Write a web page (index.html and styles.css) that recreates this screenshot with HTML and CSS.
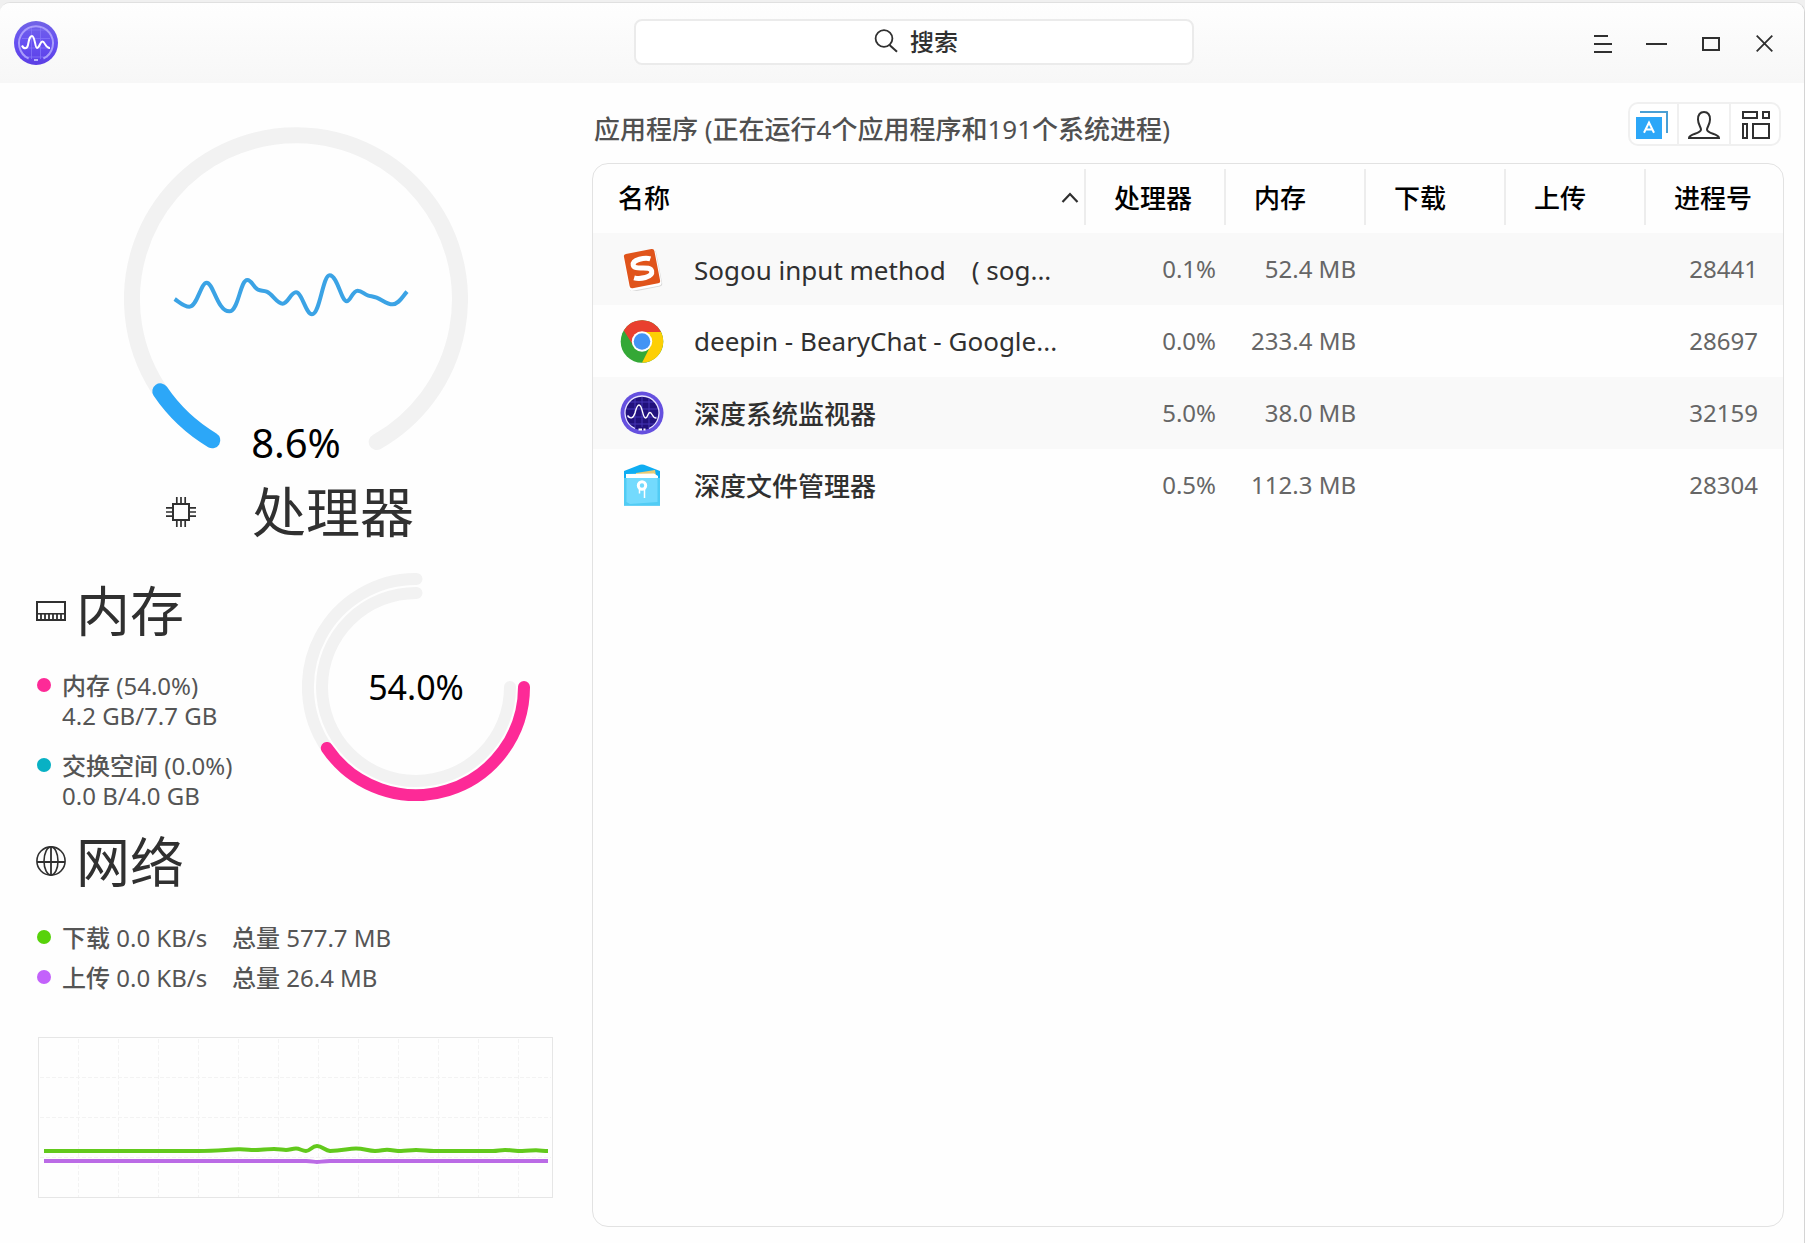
FILE: index.html
```html
<!DOCTYPE html>
<html lang="zh-CN">
<head>
<meta charset="utf-8">
<title>深度系统监视器</title>
<link rel="stylesheet" href="styles.css">
</head>
<body>
<div class="window">
  <header class="titlebar">
    <svg class="logo" width="44" height="44" viewBox="0 0 44 44">
      <defs>
        <linearGradient id="logo-bg" x1="0" y1="0" x2="0" y2="1"><stop offset="0" stop-color="#7163e6"/><stop offset="0.5" stop-color="#6650f2"/><stop offset="1" stop-color="#5b3ee4"/></linearGradient>
      </defs>
      <circle cx="22" cy="22" r="22" fill="url(#logo-bg)"/>
      <path d="M8 17.5H36M8 27H36M10 36H34M17.5 6V38M26.5 6V38M10 9H34" stroke="#8474f8" stroke-width="0.8" fill="none"/>
      <path d="M14.6 37.5A17 17 0 1 1 29.4 37.5" fill="none" stroke="#a99cfb" stroke-width="2"/>
      <path d="M8 24.5C9.500 28 13 28.500 14 24C15 19 15.500 15 18 15C21 15 21 27 23 27C25.500 27 26 20.500 28.500 20.500C31 20.500 31.500 27.500 36 27" fill="none" stroke="#fff" stroke-width="2"/>
      <rect x="20" y="38" width="4" height="2" fill="#b9b0fb"/>
    </svg>
    <div class="search">
      <svg width="24" height="24" viewBox="0 0 24 24" fill="none" stroke="#303030" stroke-width="1.8"><circle cx="10" cy="9.500" r="8.400"/><path d="M15.500 16L23 22.800" stroke-width="2"/></svg>
      <b>搜索</b>
    </div>
    <div class="controls">
      <svg width="18" height="18" viewBox="0 0 18 18" fill="#303030"><path d="M0 0H14V2H0ZM0 8H18V10H0ZM0 16H18V18H0Z"/></svg>
      <svg width="21" height="18" viewBox="0 0 21 18" fill="#303030"><path d="M0 8H21V10H0Z"/></svg>
      <svg class="maximize" width="18" height="18" viewBox="0 0 18 18" fill="none" stroke="#303030" stroke-width="2"><path d="M1 3H17V15H1Z"/></svg>
      <svg class="close" width="17" height="18" viewBox="0 0 17 18" fill="none" stroke="#303030" stroke-width="1.8"><path d="M0.700 0.700L16.300 16.300M16.300 0.700L0.700 16.300"/></svg>
    </div>
  </header>

  <main class="content">
    <aside class="sidebar">
      <section class="cpu">
        <svg class="cpu-gauge" width="344" height="344" viewBox="0 0 344 344" fill="none">
          <path d="M88.300 313.300A164 164 0 1 1 252.700 315" stroke="#f2f2f2" stroke-width="16" stroke-linecap="round"/>
          <path d="M88.300 313.300A164 164 0 0 1 36.300 264.300" stroke="#2ca7f8" stroke-width="16" stroke-linecap="round"/>
          <g transform="translate(-24 -17) scale(0.33333)">
            <path d="M224 567C240 578 252 590 268 590C292 590 302 518 320 518C340 518 352 604 388 604C416 604 420 510 442 510C456 510 460 533 474 539C484 543 490 541 500 545C518 552 530 581 548 581C564 581 572 547 588 547C606 547 618 613 636 613C660 613 668 496 689 496C712 496 724 574 740 574C752 574 757 542 773 542C786 542 792 553 803 556C812 559 820 559 830 563C848 570 860 583 878 583C896 583 906 562 921 545" stroke="#3ba3e5" stroke-width="12"/>
          </g>
          <text class="gauge-text" x="172" y="331" text-anchor="middle" font-size="40">8.6%</text>
        </svg>
        <div class="cpu-title">
          <svg width="30" height="30" viewBox="0 0 30 30" fill="none" stroke="#303030"><path d="M7 7H23V23H7Z" stroke-width="2"/><path d="M10.800 0V6M15 0V6M19.200 0V6M10.800 24V30M15 24V30M19.200 24V30M0 10.800H6M0 15H6M0 19.200H6M24 10.800H30M24 15H30M24 19.200H30" stroke-width="1.700"/></svg>
          <h2>处理器</h2>
        </div>
      </section>

      <section class="memory">
        <div class="memory-info">
          <div class="section-title">
            <svg class="ram-icon" width="30" height="20" viewBox="0 0 30 20" fill="none" stroke="#303030"><path d="M1 1H29V19H1Z" stroke-width="2"/><path d="M1 12.800H29" stroke-width="1.600"/><path d="M5 13V18M9 13V18M13 13V18M17 13V18M21 13V18M25 13V18" stroke-width="1.800"/></svg>
            <h2>内存</h2>
          </div>
          <div class="stat"><i class="dot pink"></i><p><b>内存</b> (54.0%)<br>4.2 GB/7.7 GB</p></div>
          <div class="stat"><i class="dot teal"></i><p><b>交换空间</b> (0.0%)<br>0.0 B/4.0 GB</p></div>
        </div>
        <svg class="memory-gauge" width="228" height="228" viewBox="0 0 228 228" fill="none" stroke-width="12" stroke-linecap="round">
          <path d="M114.500 6A108 108 0 0 0 24.800 175" stroke="#f2f2f2"/>
          <path d="M114.500 20A94 94 0 1 0 208 114" stroke="#f2f2f2"/>
          <path d="M222 114A108 108 0 0 1 24.800 175" stroke="#fd2a97"/>
          <text class="gauge-text" x="114" y="127" text-anchor="middle" font-size="34">54.0%</text>
        </svg>
      </section>

      <section class="network">
        <div class="section-title">
          <svg width="30" height="30" viewBox="0 0 30 30" fill="none" stroke="#303030" stroke-width="1.600"><circle cx="15" cy="15" r="14.100"/><ellipse cx="15" cy="15" rx="7" ry="14.100"/><path d="M1 16H29M15 1V29" stroke-width="1.800"/></svg>
          <h2>网络</h2>
        </div>
        <div class="stat"><i class="dot green"></i><p class="rate"><b>下载</b> 0.0 KB/s</p><p><b>总量</b> 577.7 MB</p></div>
        <div class="stat"><i class="dot purple"></i><p class="rate"><b>上传</b> 0.0 KB/s</p><p><b>总量</b> 26.4 MB</p></div>
        <svg class="chart" width="515" height="161" viewBox="0 0 515 161" fill="none">
          <path d="M40.500 2V160M80.500 2V160M120.500 2V160M160.500 2V160M200.500 2V160M240.500 2V160M280.500 2V160M320.500 2V160M360.500 2V160M400.500 2V160M440.500 2V160M480.500 2V160M2 40.500H513M2 80.500H513M2 120.500H513" stroke="#f3f3f3" stroke-dasharray="4 2"/>
          <rect x="0.500" y="0.500" width="514" height="160" stroke="#e6e6e6"/>
          <path d="M6 114H160C180 113.800 190 112.500 200 112.300S210 113 216 113S230 112 236 112S244 113 248 113S254 111.500 258 111.500S264 114 268 114S274 109 279 109S287 113.500 292 114C304 114 310 111.500 318 111.500S330 114 337 114S344 112.800 349 112.800S358 114 363 114S372 113 378 113S390 114 396 114H455C460 114 462 113 467 113S478 114 484 114S494 113.300 498 113.300S506 114 510 114" stroke="#62c91c" stroke-width="4"/>
          <path d="M6 124H268C274 124 276 125 279 125S286 124 292 124H510" stroke="#bb6be6" stroke-width="4"/>
        </svg>
      </section>
    </aside>

    <section class="processes">
      <div class="processes-head">
        <h1><b>应用程序</b> (<b>正在运行</b>4<b>个应用程序和</b>191<b>个系统进程</b>)</h1>
        <div class="tabs">
          <button class="tab apps"><svg width="32" height="28" viewBox="0 0 32 28"><path d="M0 6H26V28H0Z" fill="#2ca7f8"/><path d="M4 1H31V22" fill="none" stroke="#4a9fd4" stroke-width="2"/><path d="M8 21.800L13 11.500L18 21.800M10 18.500H16" fill="none" stroke="#fff" stroke-width="2"/></svg></button>
          <button class="tab"><svg width="32" height="28" viewBox="0 0 32 28" fill="none" stroke="#303030" stroke-width="2"><path d="M1 27C1 22.500 13 23 13 18.500C13 16 10 13.500 10 8.500C10 3.500 12.500 1 16 1S22 3.500 22 8.500C22 13.500 19 16 19 18.500C19 23 31 22.500 31 27Z"/></svg></button>
          <button class="tab all"><svg width="28" height="28" viewBox="0 0 28 28" fill="none" stroke="#303030" stroke-width="2"><path d="M1 1H15V7H1ZM21 1H27V7H21ZM1 13H5V27H1ZM11 13H27V27H11Z"/></svg></button>
        </div>
      </div>

      <div class="table">
        <div class="row head">
          <div class="cell">名称<svg width="18" height="12" viewBox="0 0 18 12" fill="none" stroke="#303030" stroke-width="2.200"><path d="M1.500 10L9 2L16.500 10"/></svg></div>
          <div class="cell">处理器</div><div class="cell">内存</div><div class="cell">下载</div><div class="cell">上传</div><div class="cell">进程号</div>
        </div>
        <div class="row">
          <div class="name">
            <svg width="44" height="44" viewBox="0 0 44 44"><g transform="translate(0.8 1) rotate(-11 22 22)"><rect x="5.500" y="4.500" width="33" height="37" rx="3" fill="#d9d9d9"/><rect x="5" y="4" width="33" height="36.500" rx="3" fill="#fff"/><rect x="6" y="3" width="31" height="35" rx="2.500" fill="#e0541b"/><path d="M31.500 12.500C27 10 13.500 9.500 13.500 15.500C13.500 21.500 30.500 18 30.500 25C30.500 31.500 17 30.500 12 28" fill="none" stroke="#fff" stroke-width="5"/></g></svg>
            <span>Sogou input method　( sog...</span>
          </div>
          <div class="num">0.1%</div><div class="num">52.4 MB</div><div></div><div></div><div class="num">28441</div>
        </div>
        <div class="row">
          <div class="name">
            <svg width="44" height="44" viewBox="0 0 44 44"><g transform="translate(0 0.5)"><circle cx="22" cy="22" r="21.300" fill="#34a836"/><path d="M22 12.500H41A21.300 21.300 0 0 1 22 43.300L30.500 26.500Z" fill="#fdcf05"/><path d="M3.800 11A21.300 21.300 0 0 1 41 12.500H22L13.500 26.500Z" fill="#e9402f"/><circle cx="22" cy="22" r="10.200" fill="#fff"/><circle cx="22" cy="22" r="8.300" fill="#4394f4"/></g></svg>
            <span>deepin - BearyChat - Google...</span>
          </div>
          <div class="num">0.0%</div><div class="num">233.4 MB</div><div></div><div></div><div class="num">28697</div>
        </div>
        <div class="row">
          <div class="name">
            <svg width="44" height="44" viewBox="0 0 44 44"><circle cx="22" cy="22" r="21.500" fill="#6550df"/><circle cx="22" cy="22" r="17" fill="#21117c"/><path d="M6 18H38M6 26H38M9 33H35M9 11H35M15 7V37M22 5V36M29 7V37" stroke="#4736b5" stroke-width="1"/><path d="M15 37.500A17 17 0 1 1 29 37.500" fill="none" stroke="#e6e2ff" stroke-width="1.300"/><path d="M7.500 24.500C10 28 13 28 15 22C16 18 17 14 19 14C22.500 14 22.500 27 25.500 27C28 27 27.500 21.500 30 21.500C32.500 21.500 32 27.500 36.500 27" fill="none" stroke="#fff" stroke-width="1.400"/><path d="M18.500 38.500H22M23.500 38.500H25.500" stroke="#fff" stroke-width="2"/></svg>
            <b>深度系统监视器</b>
          </div>
          <div class="num">5.0%</div><div class="num">38.0 MB</div><div></div><div></div><div class="num">32159</div>
        </div>
        <div class="row">
          <div class="name">
            <svg width="44" height="44" viewBox="0 0 44 44"><path d="M4 8L20 1.800Q22 1 24 1.800L40 8V42.500H4Z" fill="#0fadf2"/><path d="M16 10L35 7L36 13H16Z" fill="#e9ca74"/><path d="M6 11L34 10.500L38 13V18H6Z" fill="#fff"/><path d="M4 15H40V42.500H4Z" fill="#51ccf4"/><path d="M6.500 15H37.500V39L10 41L6.500 39Z" fill="#73dafd"/><circle cx="22" cy="22.500" r="3.700" fill="none" stroke="#fff" stroke-width="3"/><path d="M19.500 26V30.500M24.500 26V35" stroke="#fff" stroke-width="1.500"/></svg>
            <b>深度文件管理器</b>
          </div>
          <div class="num">0.5%</div><div class="num">112.3 MB</div><div></div><div></div><div class="num">28304</div>
        </div>
      </div>
    </section>
  </main>
</div>
</body>
</html>
```
FILE: styles.css
```css
* { box-sizing: border-box; }

body {
  margin: 0;
  background: #f0f0f0;
  font-family: "Noto Sans", "Noto Sans CJK SC", sans-serif;
  color: #303030;
}

h1, h2, p { margin: 0; font-weight: 400; }
b { font-weight: 500; }
svg { display: block; flex: none; }

.window {
  width: 1805px;
  height: 1241px;
  margin-top: 2px;
  border-top: 1px solid #e0e0e0;
  border-right: 1px solid #d4d4d4;
  border-radius: 10px 10px 0 0;
  background: #fefefe;
  overflow: hidden;
  display: flex;
  flex-direction: column;
}

/* Title bar */
.titlebar {
  flex: none;
  height: 80px;
  display: flex;
  align-items: center;
  padding: 0 31px 0 14px;
  background: linear-gradient(#fefefe, #f7f7f7);
}

.search {
  width: 560px;
  height: 46px;
  margin: 0 auto 3px 576px;
  padding: 0 0 1px 4px;
  border: 2px solid #ebebeb;
  border-radius: 8px;
  background: #fff;
  display: flex;
  align-items: center;
  justify-content: center;
  gap: 12px;
  font-size: 24px;
  line-height: 41px;
}

.controls {
  display: flex;
  align-items: center;
  gap: 34px;
  padding-top: 2px;
}
.controls .maximize { margin-left: 1px; }
.controls .close { margin-left: 2px; }

/* Main area */
.content { flex: 1; display: flex; }
.sidebar { width: 592px; flex: none; padding-top: 44px; }

.cpu-gauge { margin-left: 124px; }
.gauge-text { fill: #000; }

.cpu-title, .section-title {
  display: flex;
  align-items: center;
  height: 60px;
}
.cpu-title { margin-top: 11px; padding-left: 166px; gap: 56px; }
.section-title { gap: 10px; }
.cpu-title h2, .section-title h2 { font-size: 54px; line-height: 60px; }
.section-title h2 { padding-top: 1px; }
.ram-icon { margin-top: 2px; }

.memory { display: flex; margin-top: 31px; }
.memory-info { width: 302px; padding: 7px 0 0 36px; }
.memory-info .section-title { margin-bottom: 31px; }
.memory-info .stat + .stat { margin-top: 20px; }

.network { padding: 20px 0 0 36px; }
.network .section-title { margin-bottom: 32px; }
.network .stat + .stat { margin-top: 10px; }

.stat {
  display: flex;
  align-items: flex-start;
  font-size: 24px;
  line-height: 30px;
  color: #555;
  white-space: nowrap;
}
.rate { width: 170px; }

.dot {
  flex: none;
  width: 14px;
  height: 14px;
  margin: 7px 11px 0 1px;
  border-radius: 50%;
}
.pink { background: #fd2a97; }
.teal { background: #08b1c4; }
.green { background: #57d20a; }
.purple { background: #c362fb; }

.chart { margin: 44px 0 0 2px; }

/* Process list */
.processes {
  width: 1192px;
  padding-top: 19px;
}

.processes-head {
  display: flex;
  justify-content: space-between;
  height: 61px;
  padding: 0 3px 0 2px;
}
.processes-head h1 {
  font-size: 26px;
  line-height: 54px;
  color: #505050;
}

.tabs {
  display: grid;
  grid-template-columns: 47px 52px 50px;
  width: 153px;
  height: 44px;
  border: 2px solid #f0f0f0;
  border-radius: 10px;
  background: #fff;
}
.tab {
  display: flex;
  align-items: center;
  justify-content: center;
  padding: 2px 0 0;
  border: 0;
  background: none;
}
.tab + .tab { border-left: 2px solid #f0f0f0; }
.tab.apps { padding-right: 3px; }
.tab.all { padding-left: 2px; }

.table {
  height: 1064px;
  border: 1px solid #e2e2e2;
  border-radius: 16px;
  overflow: hidden;
}

.row {
  display: grid;
  grid-template-columns: 491px 140px 140px 140px 140px 139px;
  height: 72px;
  align-items: center;
}
.row:nth-child(even) { background: #f9f9f9; }

.head {
  height: 69px;
  padding-bottom: 3px;
  font-size: 26px;
  font-weight: 500;
  color: #000;
}
.head .cell {
  height: 56px;
  line-height: 58px;
  padding-left: 28px;
  border-left: 2px solid #ededed;
}
.head .cell:first-child {
  display: flex;
  justify-content: space-between;
  align-items: center;
  padding: 1px 5px 0 25px;
  border-left: 0;
}

.name {
  display: flex;
  align-items: center;
  gap: 30px;
  padding-left: 27px;
  font-size: 26px;
  white-space: pre;
}
.name span { padding-bottom: 1px; }

.num {
  padding: 0 8px 2px 0;
  text-align: right;
  font-size: 24px;
  color: #666;
}
.num:last-child { padding-right: 25px; }
```
